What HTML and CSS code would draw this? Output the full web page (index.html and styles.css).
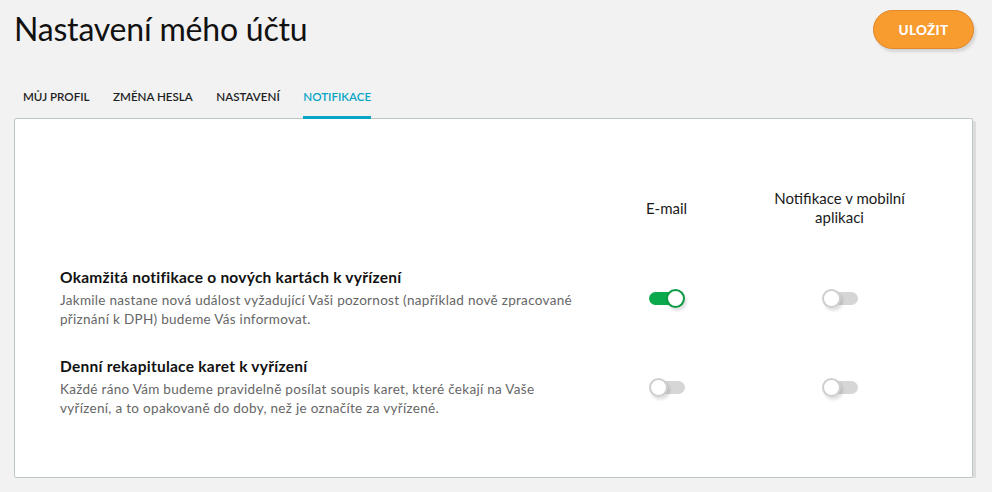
FILE: index.html
```html
<!DOCTYPE html>
<html lang="cs">
<head>
<meta charset="utf-8">
<title>Nastavení mého účtu</title>
<link rel="stylesheet" href="styles.css">
</head>
<body>
<div class="page">
  <header class="top">
    <h1 class="title">Nastavení mého účtu</h1>
    <button class="save">ULOŽIT</button>
  </header>
  <nav class="tabs">
    <a class="tab">MŮJ PROFIL</a>
    <a class="tab">ZMĚNA HESLA</a>
    <a class="tab">NASTAVENÍ</a>
    <a class="tab active">NOTIFIKACE</a>
  </nav>
  <section class="card">
    <div class="grid">
      <div class="head-empty"></div>
      <div class="col-head">E-mail</div>
      <div class="col-head">Notifikace v mobilní<br>aplikaci</div>

      <div class="item">
        <div class="item-title">Okamžitá notifikace o nových kartách k vyřízení</div>
        <div class="item-desc">Jakmile nastane nová událost vyžadující Vaši pozornost (například nově zpracované přiznání k DPH) budeme Vás informovat.</div>
      </div>
      <div class="cell"><span class="toggle on"><span class="knob"></span></span></div>
      <div class="cell"><span class="toggle"><span class="knob"></span></span></div>

      <div class="item second">
        <div class="item-title">Denní rekapitulace karet k vyřízení</div>
        <div class="item-desc">Každé ráno Vám budeme pravidelně posílat soupis karet, které čekají na Vaše vyřízení, a to opakovaně do doby, než je označíte za vyřízené.</div>
      </div>
      <div class="cell second"><span class="toggle"><span class="knob"></span></span></div>
      <div class="cell second"><span class="toggle"><span class="knob"></span></span></div>
    </div>
  </section>
</div>
</body>
</html>
```
FILE: styles.css
```css
html, body {
  margin: 0;
  padding: 0;
  background: #f2f2f2;
}
body {
  font-family: Lato, "Open Sans", "Liberation Sans", sans-serif;
  color: #1a1a1a;
}
.page {
  padding: 0 19px 0 14px;
}
.top {
  display: flex;
  align-items: flex-start;
  justify-content: space-between;
  padding-top: 10px;
  height: 60px;
}
.title {
  margin: 0;
  font-size: 32px;
  font-weight: 400;
  line-height: 38px;
  letter-spacing: -0.2px;
  color: #111;
}
.save {
  width: 101px;
  height: 39px;
  margin-right: -1px;
  border-radius: 20px;
  border: 1px solid #e0852a;
  background: #f99c2f;
  color: #fff;
  font-family: inherit;
  font-weight: 900;
  font-size: 13.5px;
  letter-spacing: 0.3px;
  box-shadow: 2px 3px 3px rgba(0, 0, 0, 0.12);
  cursor: pointer;
}
.tabs {
  display: flex;
  gap: 23.5px;
  padding-left: 9px;
  margin-top: 19px;
}
.tab {
  font-size: 11.6px;
  font-weight: 600;
  color: #1f1f1f;
  line-height: 16px;
  padding-bottom: 11px;
  border-bottom: 3px solid transparent;
  margin-bottom: -1px;
}
.tab.active {
  color: #0aa5c6;
  border-bottom-color: #0aa5c6;
}
.card {
  background: #fff;
  border: 1px solid #bcc7c6;
  border-radius: 2px;
  box-shadow: 3px 3px 0 #dcdcdc;
  padding: 70px 46px 59px 45px;
}
.grid {
  display: grid;
  grid-template-columns: 1fr 173px 173px;
  align-items: center;
}
.col-head {
  text-align: center;
  font-size: 15px;
  line-height: 19px;
  color: #1a1a1a;
}
.item {
  margin-top: 40px;
}
.item.second, .cell.second {
  margin-top: 27px;
}
.cell {
  margin-top: 40px;
  display: flex;
  justify-content: center;
}
.item-title {
  font-size: 15.5px;
  font-weight: 700;
  letter-spacing: 0.25px;
  line-height: 20px;
  color: #111;
}
.item-desc {
  margin-top: 4px;
  font-size: 13.5px;
  letter-spacing: 0.3px;
  line-height: 19px;
  color: #666;
  max-width: 520px;
}
.toggle {
  position: relative;
  display: block;
  width: 36px;
  height: 19px;
}
.toggle::before {
  content: "";
  position: absolute;
  left: 2px;
  right: 0;
  top: 3px;
  height: 13px;
  border-radius: 7px;
  background: #d6d6d6;
}
.toggle.on::before {
  background: #0aaa4c;
  left: 0;
  right: 2px;
}
.knob {
  position: absolute;
  top: 0;
  left: 0;
  width: 19px;
  height: 19px;
  box-sizing: border-box;
  border-radius: 50%;
  background: #fff;
  border: 2px solid #cfcfcf;
  box-shadow: 2px 3px 3px rgba(0, 0, 0, 0.12);
}
.toggle.on .knob {
  left: auto;
  right: 0;
  border-color: #0a9a42;
}
```
